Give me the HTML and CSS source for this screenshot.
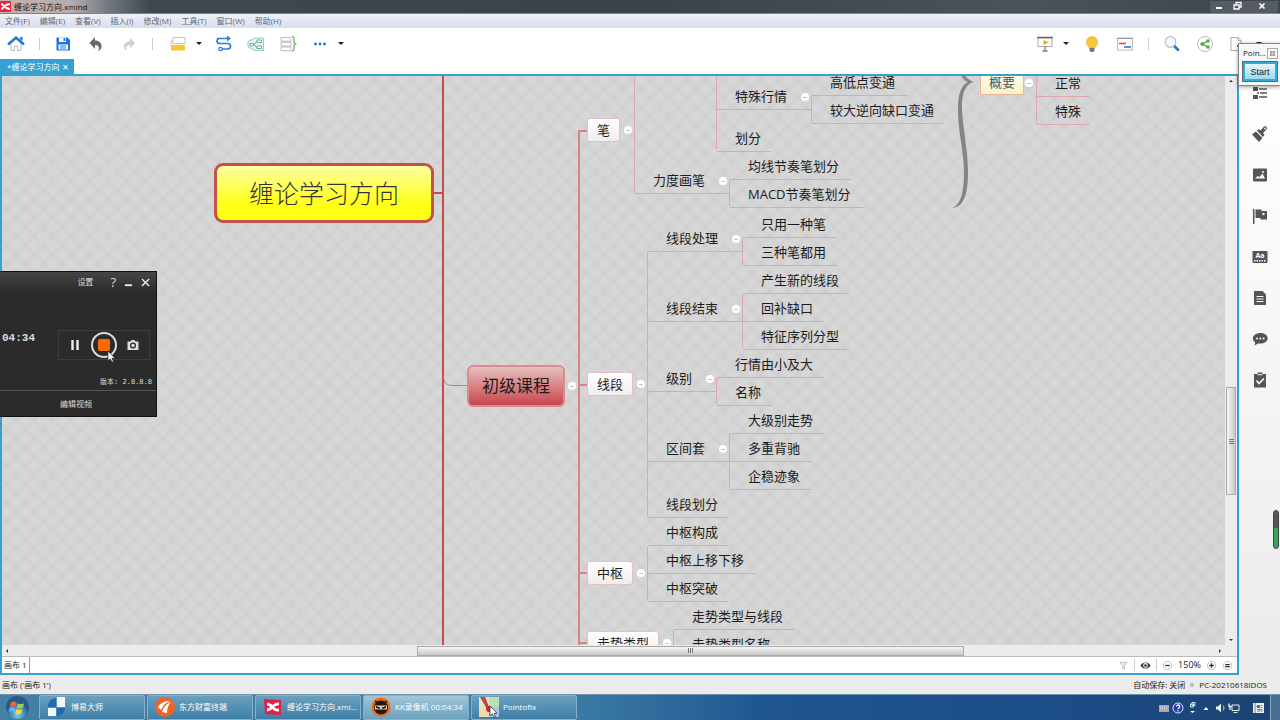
FILE: index.html
```html
<!DOCTYPE html>
<html lang="zh-CN">
<head>
    <meta charset="UTF-8">
    <meta name="viewport" content="width=device-width, initial-scale=1.0">
    <title>缠论学习方向.xmind</title>
    <link rel="stylesheet" href="styles.css">
</head>
<body>
    <header class="title-bar">
        <svg class="app-logo" viewBox="0 0 11 11"><rect width="11" height="11" rx="1" fill="#e8213c"/><path d="M1 3c3 0 3 5 9 5M1 8c3 0 3-5 9-5" stroke="#fff" stroke-width="2" fill="none"/></svg>
        <span class="window-title">缠论学习方向.xmind</span>
        <div class="window-buttons">
            <button aria-label="最小化"><svg viewBox="0 0 10 10"><path d="M2 7h6" stroke="#fff" stroke-width="2"/></svg></button>
            <button aria-label="还原"><svg viewBox="0 0 10 10"><path d="M4 3V1.500h5V6H7M2 4h5v4H2z" stroke="#fff" stroke-width="1.300" fill="none"/></svg></button>
            <button class="close" aria-label="关闭"><svg viewBox="0 0 10 10"><path d="M2.500 2.500l5 5M7.500 2.500l-5 5" stroke="#fff" stroke-width="1.700"/></svg></button>
        </div>
    </header>

    <nav class="menu-bar">
        <button>文件(F)</button>
        <button>编辑(E)</button>
        <button>查看(V)</button>
        <button>插入(I)</button>
        <button>修改(M)</button>
        <button>工具(T)</button>
        <button>窗口(W)</button>
        <button>帮助(H)</button>
    </nav>

    <div class="toolbar">
        <div class="tools">
            <button aria-label="主页"><svg viewBox="0 0 20 20"><path d="M5 9v7.500h3.500V12h3v4.500H15V9l-5-4z" fill="#fff" stroke="#bbb"/><path d="M2 10.500L10 3.500l8 7" fill="none" stroke="#1d76d8" stroke-width="2.400"/><path d="M14 3h2.500v4L14 5z" fill="#1d76d8"/></svg></button>
            <span class="separator"></span>
            <button aria-label="保存"><svg viewBox="0 0 20 20"><path d="M3.500 3.500h11l2.500 2.500v10.500H3.500z" fill="#1d76d8"/><path d="M6 3.500h7V8H6z" fill="#fff"/><path d="M10.500 4h1.800v3h-1.800z" fill="#1d76d8"/><path d="M5.500 10.500h9.500v5H5.500z" fill="#fff"/><path d="M7 12h6M7 14h6" stroke="#1d76d8"/></svg></button>
            <button aria-label="撤销"><svg viewBox="0 0 20 20"><path d="M9 3v3.500c4 0 7 2.500 6.500 6.500-.3 2-1.500 3.500-3.500 4 2-3 1-6-3-6v4L3.500 9z" fill="#6a6a6a"/></svg></button>
            <button aria-label="重做"><svg viewBox="0 0 20 20"><path d="M11 4v3.500c-4 0-6.500 2.500-6 5.500.3 1.800 1.300 3 3 3.500-1.500-2.500-1-5.500 3-5.500v3.500L16 9z" fill="#cfcfcf"/></svg></button>
            <span class="separator"></span>
        </div>
        <div class="tools insert-tools">
            <div class="split">
                <button aria-label="主题"><svg viewBox="0 0 20 20"><path d="M5 3.500h12v6H5zM3 7v5" fill="none" stroke="#c4c4c4"/><path d="M3 7h2" stroke="#c4c4c4"/><rect x="3" y="11" width="14" height="5.500" rx=".8" fill="#fbc62c"/></svg></button>
                <button class="caret" aria-label="更多主题"></button>
            </div>
            <button aria-label="联系"><svg viewBox="0 0 20 20"><path d="M3 4.500h11M6 4.500c-4 0-4 5 0 5h7.500c4 0 4 5.500 0 5.500H8" fill="none" stroke="#2a7fd8" stroke-width="1.700"/><path d="M13 1.500l4 3-4 3z" fill="#2a7fd8"/><circle cx="6.500" cy="15" r="1.700" fill="#fff" stroke="#2a7fd8" stroke-width="1.300"/></svg></button>
            <button aria-label="外框"><svg viewBox="0 0 20 20"><path d="M2 7.500L9 4h8.500v12.500H9L2 13z" fill="#e3f2fb" stroke="#93c8e8"/><path d="M6.500 10.500h2l2-3h1M8.500 10.500l2 3h1" fill="none" stroke="#69b578"/><path d="M4 9.500h3.500v2.500H4zM11 6h4.500v2.500H11zM11 12h4.500v2.500H11z" fill="#fff" stroke="#69b578"/></svg></button>
            <button aria-label="概要"><svg viewBox="0 0 20 20"><path d="M3 3.500h10v3.700H3zM3 8.300h10V12H3zM3 13h10v3.700H3z" fill="#fff" stroke="#bcbcbc"/><path d="M14 2.500c3 0 1.500 3 2 5.500.2 1 .7 1.500 1.500 1.800-.8.300-1.300.8-1.500 1.700-.5 2.500 1 5.500-2 5.500" fill="none" stroke="#7bb86b" stroke-width="1.400"/></svg></button>
            <div class="split">
                <button aria-label="更多"><svg viewBox="0 0 20 20"><g fill="#2273b8"><circle cx="5.500" cy="10" r="1.400"/><circle cx="10" cy="10" r="1.400"/><circle cx="14.500" cy="10" r="1.400"/></g></svg></button>
                <button class="caret" aria-label="展开更多"></button>
            </div>
        </div>
        <div class="tools share-tools">
            <div class="split">
                <button aria-label="演示"><svg viewBox="0 0 20 20"><path d="M3 4h14v8.500H3z" fill="#fff" stroke="#aaa"/><path d="M2 3.500h16" stroke="#666" stroke-width="1.500"/><path d="M8.500 6l5 2.500-5 2.500z" fill="#f2a22a"/><path d="M10 12.500V16M7.500 17h5" stroke="#777" stroke-width="1.300"/></svg></button>
                <button class="caret" aria-label="演示选项"></button>
            </div>
            <button aria-label="头脑风暴"><svg viewBox="0 0 20 20"><path d="M10 2.500a5.700 5.700 0 0 0-3.500 10.200l.8 1.300h5.400l.8-1.300A5.700 5.700 0 0 0 10 2.500z" fill="#fbc437" stroke="#eeb122" stroke-width=".6"/><path d="M7.500 14h5v2.500L11.300 18H8.700L7.500 16.500z" fill="#777"/></svg></button>
            <button aria-label="甘特图"><svg viewBox="0 0 20 20"><rect x="2.500" y="4" width="15" height="12" fill="#fff" stroke="#bbb"/><path d="M2 4.500h16" stroke="#999"/><path d="M4 9.500h7" stroke="#e34848" stroke-width="1.600"/><path d="M9 13h7" stroke="#2a77d0" stroke-width="1.600"/></svg></button>
            <span class="separator"></span>
            <button aria-label="搜索"><svg viewBox="0 0 20 20"><circle cx="8.500" cy="8" r="5.300" fill="#f2f8fd" stroke="#b5bfc8" stroke-width="1.200"/><path d="M12.300 12l4.500 4.700" stroke="#246fd0" stroke-width="2.600"/></svg></button>
            <button aria-label="分享"><svg viewBox="0 0 20 20"><circle cx="10" cy="10" r="7.500" fill="#fff" stroke="#bbb"/><path d="M13 7l-5.500 3 5.500 3" fill="none" stroke="#4cae50" stroke-width="1.300"/><g fill="#4cae50"><circle cx="13" cy="7" r="1.800"/><circle cx="7.300" cy="10" r="2"/><circle cx="13" cy="13" r="1.800"/></g></svg></button>
            <div class="split">
                <button aria-label="导出"><svg viewBox="0 0 20 20"><path d="M3 3.500h7l3 3V16.500H3zM10 3.500v3h3" fill="#fff" stroke="#aaa"/><path d="M9 12h6" stroke="#2a77d0" stroke-width="2"/></svg></button>
                <button class="caret" aria-label="导出选项"></button>
            </div>
        </div>
    </div>

    <div class="tab-row">
        <button class="file-tab">*缠论学习方向 <span class="tab-close">✕</span></button>
    </div>

    <main class="workspace">
        <section class="editor">
            <div class="canvas-row">
                <div class="canvas" id="canvas">
                    <svg class="links" id="links"></svg>
                </div>
                <div class="scroll-y">
                    <i class="arrow up"></i>
                    <div class="thumb-y"></div>
                    <i class="arrow down"></i>
                </div>
            </div>
            <div class="scroll-x">
                <i class="arrow left"></i>
                <div class="thumb-x"></div>
                <i class="arrow right"></i>
            </div>
            <div class="sheet-bar">
                <button class="sheet-tab">画布 1</button>
                <div class="zoom-tools">
                    <button aria-label="筛选"><svg viewBox="0 0 12 12"><path d="M2 2.500h8L7 6v4L5 9V6z" fill="#eee" stroke="#bbb"/></svg></button>
                    <span class="separator"></span>
                    <button aria-label="显示"><svg viewBox="0 0 12 12"><path d="M.5 6C3 1.500 9 1.500 11.500 6 9 10.500 3 10.500.5 6z" fill="#333"/><circle cx="6" cy="6" r="2.600" fill="#fff"/><circle cx="6" cy="6" r="1.500" fill="#333"/></svg></button>
                    <span class="separator"></span>
                    <button aria-label="缩小"><svg viewBox="0 0 12 12"><circle cx="6" cy="6" r="4.500" fill="#fff" stroke="#bbb"/><path d="M3.500 6h5" stroke="#333" stroke-width="1.400"/></svg></button>
                    <span class="zoom-value">150%</span>
                    <button aria-label="放大"><svg viewBox="0 0 12 12"><circle cx="6" cy="6" r="4.500" fill="#fff" stroke="#bbb"/><path d="M3.500 6h5M6 3.500v5" stroke="#333" stroke-width="1.400"/></svg></button>
                    <button aria-label="实际大小"><svg viewBox="0 0 12 12"><circle cx="6" cy="6" r="4.500" fill="#fff" stroke="#bbb"/><path d="M3.500 5h5M3.500 7.200h5" stroke="#333" stroke-width="1.200"/></svg></button>
                </div>
            </div>
        </section>

        <aside class="side-bar">
            <button aria-label="大纲"><svg viewBox="0 0 18 18"><path d="M2 3h5v4H2zM2 11h5v4H2z" fill="#555"/><path d="M8 5h8M9 9h7M8 13h8M6 9h2" stroke="#555" stroke-width="1.500"/></svg></button>
            <button aria-label="格式"><svg viewBox="0 0 18 18"><path d="M1 9.500l4-3 6.500 6.500L8 17zM6 5.500l2-1.500 1.500 1.500L13 1.500c2-1 4 1.500 2.500 3L12 8l1.500 2-1.500 2z" fill="#555"/><circle cx="14" cy="3.500" r=".9" fill="#fff"/></svg></button>
            <button aria-label="图片"><svg viewBox="0 0 18 18"><rect x="2" y="2.500" width="14" height="13" rx="1" fill="#555"/><path d="M4 12.500l2.500-2.500 2 1 3-3.500 2.500 5z" fill="#f8f8f8"/><circle cx="12" cy="6" r="1" fill="#f8f8f8"/></svg></button>
            <button aria-label="图标"><svg viewBox="0 0 18 18"><path d="M2.700 2v15" stroke="#555" stroke-width="1.500"/><path d="M4.500 2.500h6V4H16v8.500H9.500V11h-5z" fill="#555"/><circle cx="12.500" cy="7" r="1.200" fill="#f8f8f8"/></svg></button>
            <button aria-label="标签" class="label-tool"><svg viewBox="0 0 18 18"><rect x="1.500" y="3" width="15" height="12" rx="1" fill="#555"/><path d="M3 12.700h12" stroke="#fff" stroke-width="1.500" stroke-dasharray="1.500 1"/><text x="9" y="10" text-anchor="middle">Aa</text></svg></button>
            <button aria-label="备注"><svg viewBox="0 0 18 18"><path d="M3 2h8.500L15 5.500V16H3z" fill="#555"/><path d="M5.500 7.500h7M5.500 10h7M5.500 12.500h7" stroke="#f8f8f8" stroke-width="1.200"/></svg></button>
            <button aria-label="批注"><svg viewBox="0 0 18 18"><path d="M3.500 15.500l.8-3C-1 8.500 3 3 9.500 3c9.500 0 9.500 10.500 0 10.500H7z" fill="#555"/><g fill="#f8f8f8"><circle cx="6" cy="8.500" r="1"/><circle cx="9.300" cy="8.500" r="1"/><circle cx="12.600" cy="8.500" r="1"/></g></svg></button>
            <button aria-label="任务"><svg viewBox="0 0 18 18"><path d="M3 3h3.500V1.500h5V3H15v13.500H3z" fill="#555"/><path d="M6.500 3.700h5" stroke="#f8f8f8"/><path d="M5.500 9.500l2.500 3 5-5" fill="none" stroke="#f8f8f8" stroke-width="1.700"/></svg></button>
        </aside>
    </main>

    <footer class="status-bar">
        <span>画布 ('画布 1')</span>
        <div class="status-right"><span>自动保存: 关闭</span><i class="status-dot"></i><span>PC-20210618IDOS</span></div>
    </footer>

    <div class="taskbar">
        <button class="start" aria-label="开始"><svg viewBox="0 0 26 26"><defs><radialGradient id="orb" cy=".8"><stop offset="0" stop-color="#7fd5ee"/><stop offset="1" stop-color="#245b8c"/></radialGradient></defs><circle cx="13" cy="13" r="12" fill="url(#orb)"/><path d="M6 8c2-1.500 4-1.500 6 0l-1 4.500c-2-1.200-4-1.200-6 0z" fill="#ee6535"/><path d="M13 8.500c2 1.200 4 1.200 7 0l-1.500 5c-2 1-4 1-6.500 0z" fill="#9cce4a"/><path d="M4.800 13.500c2-1.200 4-1.200 6 0L10 18c-2-1.500-4-1.500-6 0z" fill="#5ab5ef"/><path d="M11.800 14.500c2 1.200 4 1.200 6.500 0L17 19c-2 1.300-4 1.300-6.300 0z" fill="#fbd23f"/></svg></button>
        <button class="task"><svg viewBox="0 0 20 20"><path d="M9 1v9H1C1 5 4 1 9 1zM10 11h8c0 4-3 8-8 8z" fill="#2369b5"/><path d="M10 0h8v10h-8zM1 11h8v8H1z" fill="#f2f6fb"/></svg>博易大师</button>
        <button class="task"><svg viewBox="0 0 20 20"><circle cx="10" cy="10" r="10" fill="#ee6425"/><path d="M3 10c3-5 8-6 12-6-5 2-7 5-9 9zM7 15c1-4 4-8 9-10-3 3-4 7-4 11z" fill="#fff"/></svg>东方财富终端</button>
        <button class="task"><svg viewBox="0 0 20 20"><path d="M1 2l17 1v15L2 17z" fill="#e61c46"/><path d="M4 7c6 0 5 7 12 6M4 13c6 0 5-7 12-6" fill="none" stroke="#fff" stroke-width="2.800"/></svg>缠论学习方向.xmi...</button>
        <button class="task active"><svg viewBox="0 0 20 20"><circle cx="10" cy="10" r="9.500" fill="#f06a12"/><circle cx="10" cy="10.500" r="7" fill="#221a18"/><path d="M4 3l3 2h6l3-2-1 5H5z" fill="#221a18"/><path d="M4 8.500h12v4H4z" fill="#e9c9a8"/><path d="M5 9l4 1.500v1.500L5 11zM15 9l-4 1.500v1.500l4-1z" fill="#221a18"/></svg>KK录像机 00:04:34</button>
        <button class="task"><svg viewBox="0 0 20 20"><path d="M0 0h20v20H0z" fill="#e5e3c0"/><path d="M10 0h10v10H10z" fill="#b9e0b0"/><path d="M10 10h10v10H10z" fill="#a9c7ea"/><path d="M0 12h8v8H0z" fill="#f7d9a6"/><path d="M1 0h5l4 10-2 2z" fill="#b8474c"/><circle cx="10" cy="12" r="3" fill="#e1232a"/></svg>Pointofix</button>
        <div class="tray">
            <svg viewBox="0 0 12 12"><path d="M1 3h10v7H1z" fill="#aaa7ab"/><path d="M2 5h8M2 7h8" stroke="#ddd" stroke-dasharray="1 1"/></svg>
            <svg viewBox="0 0 12 12"><circle cx="6" cy="6" r="5" fill="#2536b8" stroke="#dfe7ff"/><path d="M4.500 4.500c0-2 3.200-2 3.200 0C7.700 6 6 5.800 6 7.300M6 8.300v1.200" fill="none" stroke="#fff" stroke-width="1.300"/></svg>
            <svg viewBox="0 0 12 12"><path d="M6 .5h3v3H6zM4.500 2h3v3h-3z" fill="none" stroke="#d9eaf8"/><path d="M4 9h5l-2.500 2z" fill="#fff"/></svg>
            <svg viewBox="0 0 12 12"><path d="M3.500 8L6 5l2.500 3z" fill="#fff"/></svg>
            <svg viewBox="0 0 12 12"><path d="M2 4.500h2l3-3v9l-3-3H2z" fill="#f4f7fb"/><path d="M9 3.500c1.300 1.500 1.300 3.500 0 5" fill="none" stroke="#cfdded"/></svg>
            <svg viewBox="0 0 12 12"><path d="M4 3h7v5.500H4zM5.500 10.500h4" fill="#23496f" stroke="#e3ebf3"/><path d="M1 1.500v3h3M2 4v4" fill="none" stroke="#e3ebf3" stroke-width="1.400"/></svg>
            <svg class="tray-notes" viewBox="0 0 12 12"><path d="M1 1h11v10H1z" fill="#eef2f5"/><path d="M3 1v10M5 3.500h2.500v2H5zM8.500 3.500h2M8.500 5.500h2M5 7.500h5.500M5 9h5.500" stroke="#53677b" fill="#53677b" stroke-width=".8"/></svg>
            <button class="show-desktop" aria-label="显示桌面"></button>
        </div>
    </div>

    <!-- floating windows -->
    <section class="pointofix">
        <div class="pointofix-head"><span>Poin...</span><button aria-label="关闭"><svg viewBox="0 0 9 9"><path d="M3 3h3v3H3zM2 2l1 1M7 2L6 3M2 7l1-1M7 7L6 6" fill="none" stroke="#777"/></svg></button></div>
        <button class="pointofix-start">Start</button>
    </section>

    <section class="recorder">
        <div class="recorder-head">
            <button>设置</button>
            <button class="help" aria-label="帮助">?</button>
            <button aria-label="最小化"><svg viewBox="0 0 10 10"><path d="M1 8h8" stroke="#eee" stroke-width="2"/></svg></button>
            <button aria-label="关闭"><svg viewBox="0 0 10 10"><path d="M1 1l8 8M9 1L1 9" stroke="#eee" stroke-width="1.500"/></svg></button>
        </div>
        <div class="recorder-body">
            <span class="timer">04:34</span>
            <div class="recorder-controls">
                <button aria-label="暂停"><svg viewBox="0 0 12 12"><path d="M3.500 1v10M8.500 1v10" stroke="#eee" stroke-width="2.400"/></svg></button>
                <button class="stop" aria-label="停止"><i></i></button>
                <button aria-label="截图"><svg viewBox="0 0 12 12"><path d="M.5 2.500h3L4.500 1h3l1 1.500h3V11H.5z" fill="#ddd"/><circle cx="6" cy="6.500" r="2.400" fill="#ddd" stroke="#2b2b2b" stroke-width="1.300"/></svg></button>
            </div>
        </div>
        <div class="version">版本: 2.8.8.8</div>
        <button class="edit-video">编辑视频</button>
    </section>
    <div class="volume-strip"></div>
    <svg class="cursor cursor-recorder" viewBox="0 0 9 13"><path d="M1 1v10l2.300-2.200L5 12.300l1.500-.8L5 8.300h3z" fill="#fff" stroke="#222" stroke-width=".7"/></svg>
    <svg class="cursor cursor-task" viewBox="0 0 9 13"><path d="M1 1v10l2.300-2.200L5 12.300l1.500-.8L5 8.300h3z" fill="#fff" stroke="#222" stroke-width=".7"/></svg>

    <script src="map.js"></script>
</body>
</html>
```

FILE: styles.css
```css
* {
    box-sizing: border-box;
}
body {
    margin: 0;
    height: 100vh;
    display: flex;
    flex-direction: column;
    overflow: hidden;
    font-family: "Open Sans", "Noto Sans CJK SC", sans-serif;
    font-size: 8px;
    line-height: 12px;
    color: #222;
    background: #fff;
}
button {
    margin: 0;
    padding: 0;
    border: none;
    background: none;
    font: inherit;
    color: inherit;
    white-space: nowrap;
}
svg {
    display: block;
}

/* Title and menus */
.title-bar {
    height: 14px;
    flex: none;
    display: flex;
    align-items: center;
    gap: 3px;
    background: linear-gradient(90deg, #c9b0ae 0, #b5aeb0 70px, #70767d 110px, #40474f 150px, #3a424b 50%, #4a525b 80%, #3d444c);
    border-bottom: 1px solid #7d838c;
}
.app-logo {
    width: 11px;
    height: 11px;
}
.window-title {
    color: #111;
}
.window-buttons {
    margin-left: auto;
    margin-right: 2px;
    display: flex;
    background: #565c65;
    border-radius: 0 0 3px 3px;
}
.window-buttons button {
    width: 18px;
    height: 12px;
    display: flex;
    justify-content: center;
}
.window-buttons .close {
    width: 32px;
}
.window-buttons svg {
    width: 10px;
    height: 10px;
}
.menu-bar {
    height: 14px;
    flex: none;
    display: flex;
    align-items: center;
    gap: 10px;
    padding-left: 5px;
    background: linear-gradient(#eef1f8, #d7ddef);
    color: #666;
}

/* Toolbar */
.toolbar {
    height: 31px;
    flex: none;
    display: flex;
    align-items: center;
    padding: 0 18px 0 6px;
}
.tools {
    display: flex;
    align-items: center;
    gap: 13px;
}
.insert-tools {
    margin-left: 15px;
    gap: 12px;
}
.share-tools {
    margin-left: auto;
}
.tools svg {
    width: 20px;
    height: 20px;
}
.split {
    display: flex;
    align-items: center;
    gap: 8px;
}
.separator {
    width: 1px;
    height: 12px;
    background: #ccc;
}
.caret {
    border: 3px solid transparent;
    border-top-color: #222;
    border-bottom-width: 0;
}

/* File tab */
.tab-row {
    height: 15px;
    flex: none;
}
.file-tab {
    height: 15px;
    padding: 0 5px 0 7px;
    background: #36a2d3;
    color: #fff;
}
.tab-close {
    margin-left: 1px;
}

/* Workspace */
.workspace {
    flex: 1;
    min-height: 0;
    display: flex;
}
.editor {
    flex: 1;
    min-width: 0;
    display: flex;
    flex-direction: column;
    border: 2px solid #36a0cf;
}
.canvas-row {
    flex: 1;
    min-height: 0;
    display: flex;
}
.canvas {
    position: relative;
    flex: 1;
    overflow: hidden;
    background-color: #d7d7d7;
    background-image:
        repeating-linear-gradient(45deg, rgba(0, 0, 0, 0.022), transparent 4px 9px, rgba(0, 0, 0, 0.022) 13px),
        repeating-linear-gradient(-45deg, rgba(0, 0, 0, 0.022), transparent 4px 9px, rgba(0, 0, 0, 0.022) 13px);
}
.scroll-y {
    width: 12px;
    display: flex;
    flex-direction: column;
    align-items: center;
    background: #ececec;
    padding: 4px 0;
}
.thumb-y {
    width: 10px;
    height: 108px;
    margin: auto 0 144px;
    border: 1px solid #aaa;
    background: linear-gradient(90deg, #f5f5f5, #c9c9c9);
}
.scroll-x {
    height: 12px;
    display: flex;
    align-items: center;
    background: #ececec;
    border-bottom: 1px solid #bbb;
    padding: 0 16px 0 4px;
}
.thumb-x {
    width: 45%;
    height: 10px;
    margin: 0 auto 0 409px;
    border: 1px solid #aaa;
    background: linear-gradient(#f5f5f5, #c9c9c9);
}
.thumb-y, .thumb-x {
    display: flex;
    align-items: center;
    justify-content: center;
}
.thumb-y::after, .thumb-x::after {
    content: "";
    width: 5px;
    height: 5px;
    background: repeating-linear-gradient(90deg, #777 0 1px, transparent 1px 2px);
}
.thumb-y::after {
    background: repeating-linear-gradient(#777 0 1px, transparent 1px 2px);
}
.arrow {
    border: 2px solid transparent;
}
.arrow.up {
    border-bottom-color: #333;
    border-top-width: 0;
}
.arrow.down {
    border-top-color: #333;
    border-bottom-width: 0;
}
.arrow.left {
    border-right-color: #333;
    border-left-width: 0;
}
.arrow.right {
    border-left-color: #333;
    border-right-width: 0;
}
.sheet-bar {
    height: 16px;
    display: flex;
    justify-content: space-between;
    background: #fff;
}
.sheet-tab {
    padding: 0 2px;
    border-right: 1px solid #999;
}
.zoom-tools {
    display: flex;
    align-items: center;
    gap: 5px;
    padding-right: 4px;
}
.zoom-tools svg {
    width: 11px;
    height: 11px;
}
.zoom-value {
    font-size: 9px;
}

/* Side bar */
.side-bar {
    width: 41px;
    display: flex;
    flex-direction: column;
    align-items: center;
    gap: 23px;
    padding-top: 10px;
    background: linear-gradient(#fff, #ebebeb);
}
.side-bar svg {
    width: 18px;
    height: 18px;
}
.label-tool text {
    font-size: 7px;
    font-weight: bold;
    fill: #fff;
}

/* Mind map */
.links {
    position: absolute;
    inset: 0;
    width: 100%;
    height: 100%;
    fill: none;
}
.branch {
    stroke: #dfa6ab;
    stroke-width: 1;
}
.trunk {
    stroke: #c84a4e;
    stroke-width: 2;
}
.subtrunk {
    stroke: #d98389;
    stroke-width: 2;
}
.thin {
    stroke: #cf777b;
    stroke-width: 1;
}
.brace {
    fill: #848484;
}
.topic {
    position: absolute;
    height: 20px;
    font-size: 13px;
    line-height: 20px;
    white-space: nowrap;
    color: #1c1c1c;
}
.topic.box {
    height: 24px;
    padding: 0 9px;
    line-height: 22px;
    background: linear-gradient(#fff, #f1eded);
    border: 1px solid #e8bfc2;
    border-radius: 3px;
}
.topic.note {
    height: 24px;
    padding: 0 8px;
    line-height: 20px;
    background: linear-gradient(#fffff0, #f7f2c8);
    border: 1px solid #e5b69c;
    color: #555;
}
.topic.course {
    height: 42px;
    padding: 0 13px;
    font-size: 17px;
    line-height: 38px;
    background: linear-gradient(#e9bfbf, #c6474b);
    border: 2px solid #d88b91;
    border-radius: 6px;
}
.topic.root {
    height: 60px;
    padding: 0 32px;
    font-size: 25px;
    font-weight: 300;
    line-height: 54px;
    background: linear-gradient(#ffffa0, #ffff10 75%);
    border: 3px solid #c8504a;
    border-radius: 9px;
    color: #333;
}
.toggle {
    position: absolute;
    width: 8px;
    height: 8px;
    border-radius: 4px;
    background: linear-gradient(#c4c4cc, #c4c4cc) center / 4px 1px no-repeat #fff;
}

/* Status bar */
.status-bar {
    height: 19px;
    flex: none;
    display: flex;
    align-items: center;
    justify-content: space-between;
    padding: 0 13px 0 2px;
    background: #ebebeb;
}
.status-right {
    display: flex;
    align-items: center;
    gap: 5px;
}
.status-dot {
    width: 4px;
    height: 4px;
    border: 1px solid #999;
    border-radius: 2px;
}

/* Taskbar */
.taskbar {
    height: 26px;
    flex: none;
    display: flex;
    align-items: center;
    gap: 2px;
    background: linear-gradient(90deg, #457fa3 0, #3b7ba4 45%, #1f5590 60%, #1b4c86 85%, #1c426f);
    border-top: 1px solid #6f93ac;
    color: #fff;
}
.start {
    width: 37px;
    padding-left: 5px;
}
.start svg {
    width: 25px;
    height: 25px;
}
.task {
    width: 106px;
    height: 25px;
    display: flex;
    align-items: center;
    gap: 4px;
    padding: 0 0 2px 7px;
    background: linear-gradient(#6aa0bf, #3e7fa6);
    border: 1px solid #86b1c9;
    border-radius: 2px;
}
.task.active {
    background: linear-gradient(#a3c5d7, #6ba2bd);
}
.task svg {
    width: 20px;
    height: 20px;
}
.tray {
    align-self: stretch;
    margin-left: auto;
    display: flex;
    align-items: center;
    gap: 2px;
}
.tray svg {
    width: 12px;
    height: 12px;
}
.tray .tray-notes {
    margin: 0 4px 0 10px;
}
.show-desktop {
    align-self: stretch;
    width: 10px;
    background: #496f92;
    border-left: 1px solid #8fa9bf;
}

/* Pointofix window */
.pointofix {
    position: absolute;
    top: 43px;
    right: 0;
    width: 42px;
    height: 43px;
    padding: 2px 2px 3px 4px;
    background: #f6f8fa;
    border: 1px solid #888;
    border-right: none;
    box-shadow: 0 1px 4px rgba(0, 0, 0, 0.4);
}
.pointofix-head {
    display: flex;
    align-items: center;
    justify-content: space-between;
    height: 14px;
}
.pointofix-head button {
    width: 11px;
    height: 11px;
    border: 1px solid #aaa;
}
.pointofix-start {
    width: 34px;
    height: 19px;
    margin-top: 2px;
    font-family: "Liberation Sans", sans-serif;
    font-size: 9px;
    background: linear-gradient(#e8f7fd, #9cd9f4);
    border: 2px solid #32aadc;
    outline: 1px solid #666;
}

/* Screen recorder window */
.recorder {
    position: absolute;
    top: 271px;
    left: 0;
    width: 157px;
    height: 146px;
    display: flex;
    flex-direction: column;
    background: #2b2b2b;
    border: 1px solid #111;
    border-left: none;
    color: #ddd;
}
.recorder-head {
    height: 20px;
    display: flex;
    align-items: center;
    justify-content: flex-end;
    gap: 8px;
    padding-right: 6px;
    background: linear-gradient(#454545, #2b2b2b);
}
.recorder-head svg {
    width: 9px;
    height: 9px;
}
.recorder-head .help {
    padding-left: 8px;
    border-left: 1px solid #3c3c3c;
    font-size: 13px;
}
.recorder-body {
    display: flex;
    align-items: center;
    justify-content: space-between;
    margin-top: 38px;
    padding: 0 6px 0 2px;
}
.timer {
    align-self: flex-start;
    font: bold 11px "Liberation Mono", monospace;
    line-height: 16px;
}
.recorder-controls {
    width: 92px;
    height: 30px;
    display: flex;
    align-items: center;
    justify-content: center;
    gap: 10px;
    border: 1px solid #3d3d3d;
}
.recorder-controls svg {
    width: 12px;
    height: 12px;
}
.stop {
    width: 26px;
    height: 26px;
    padding: 5px;
    border: 2px solid #ddd;
    border-radius: 13px;
}
.stop i {
    display: block;
    height: 12px;
    border-radius: 2px;
    background: #ff6a00;
}
.version {
    margin-top: auto;
    padding: 0 4px 2px;
    text-align: right;
    font-family: "DejaVu Sans Mono", "Noto Sans CJK SC", monospace;
    font-size: 7px;
}
.edit-video {
    height: 26px;
    padding-right: 4px;
    border-top: 1px solid #555;
}
.volume-strip {
    position: absolute;
    top: 510px;
    right: 1px;
    width: 6px;
    height: 39px;
    border: 1px solid #444;
    border-radius: 3px;
    background: linear-gradient(#555 45%, #36a45c 45%);
}
.cursor {
    position: absolute;
    width: 9px;
    height: 13px;
}
.cursor-recorder {
    top: 350px;
    left: 107px;
}
.cursor-task {
    top: 705px;
    left: 489px;
}
```

FILE: map.js
```js
// Part of the map that is scrolled into view
const view = { x: 2, y: 76 };

// Plain topics: text, text x, middle y, underline from, underline to
const topics = [
    ['高低点变通', 830, 83, 811, 907],
    ['特殊行情', 735, 97, 716, 811],
    ['较大逆向缺口变通', 830, 111, 811, 944],
    ['划分', 735, 139, 716, 771],
    ['均线节奏笔划分', 748, 167, 729, 851],
    ['力度画笔', 653, 181, 634, 729],
    ['MACD节奏笔划分', 748, 195, 729, 865],
    ['只用一种笔', 761, 225, 742, 837],
    ['线段处理', 666, 239, 647, 742],
    ['三种笔都用', 761, 253, 742, 837],
    ['产生新的线段', 761, 281, 742, 849],
    ['线段结束', 666, 309, 647, 742],
    ['回补缺口', 761, 309, 742, 824],
    ['特征序列分型', 761, 337, 742, 849],
    ['行情由小及大', 735, 365, 716, 824],
    ['级别', 666, 379, 647, 716],
    ['名称', 735, 393, 716, 771],
    ['大级别走势', 748, 421, 729, 824],
    ['区间套', 666, 449, 647, 729],
    ['多重背驰', 748, 449, 729, 811],
    ['企稳迹象', 748, 477, 729, 811],
    ['线段划分', 666, 505, 647, 728],
    ['中枢构成', 666, 533, 647, 728],
    ['中枢上移下移', 666, 561, 647, 755],
    ['中枢突破', 666, 589, 647, 728],
    ['走势类型与线段', 692, 617, 673, 794],
    ['走势类型名称', 692, 645, 673, 782],
    ['正常', 1055, 84, 1036, 1090],
    ['特殊', 1055, 112, 1036, 1090]
];

// Boxed topics: text, left, top, kind
const boxes = [
    ['缠论学习方向', 214, 163, 'root'],
    ['初级课程', 467, 365, 'course'],
    ['笔', 587, 118, 'box'],
    ['线段', 587, 372, 'box'],
    ['中枢', 587, 561, 'box'],
    ['走势类型', 587, 631, 'box'],
    ['概要', 980, 71, 'note']
];

// Vertical branch lines: x, top, bottom
const verticals = [
    [716, 60, 150], [811, 96, 122], [634, 60, 192], [729, 180, 206],
    [647, 252, 516], [742, 238, 264], [742, 294, 348], [716, 378, 404],
    [729, 434, 488], [647, 546, 600], [673, 630, 660], [1036, 60, 124]
];

// Collapse buttons
const toggles = [
    [628, 130], [641, 384], [641, 573], [667, 643], [572, 386], [805, 97],
    [723, 181], [736, 239], [736, 309], [710, 379], [723, 449], [1029, 83]
];

const canvas = document.getElementById('canvas');
const links = document.getElementById('links');

function addPath(className, d) {
    const path = document.createElementNS('http://www.w3.org/2000/svg', 'path');
    path.setAttribute('class', className);
    path.setAttribute('d', d);
    path.setAttribute('transform', 'translate(' + -view.x + ' ' + -view.y + ')');
    links.appendChild(path);
}

function addItem(tag, className, x, y, text) {
    const item = document.createElement(tag);
    item.className = className;
    item.style.left = (x - view.x) + 'px';
    item.style.top = (y - view.y) + 'px';
    item.textContent = text;
    canvas.appendChild(item);
    return item;
}

verticals.forEach(function([x, top, bottom]) {
    addPath('branch', `M${x + 0.5} ${top}V${bottom}`);
});
topics.forEach(function([text, x, y, from, to]) {
    addPath('branch', `M${from + 1} ${y + 12.5}H${to}`);
    addItem('div', 'topic', x, y - 11, text);
});

// Main trunk, second trunk and the brace of the summary
addPath('trunk', 'M443 60V660M434 193H443');
addPath('thin', 'M443.5 376Q443.5 385.500 452 385.500H467');
addPath('subtrunk', 'M579 660V131H587M579 385H587M579 573H587M579 643H587');
addPath('brace', 'M974 82C966 83 961 94 962 110C963 130 968 150 968 172C968 194 964 207 952 208C961 205 964 192 964 172C964 152 958 132 958 110C958 94 961 85 968 82C963 80 961 76 959 70L962 70C964 76 968 80 974 82Z');

boxes.forEach(function([text, x, y, kind]) {
    addItem('div', 'topic ' + kind, x, y, text);
});
toggles.forEach(function([x, y]) {
    addItem('button', 'toggle', x - 4, y - 4, '').setAttribute('aria-label', '折叠');
});
```
